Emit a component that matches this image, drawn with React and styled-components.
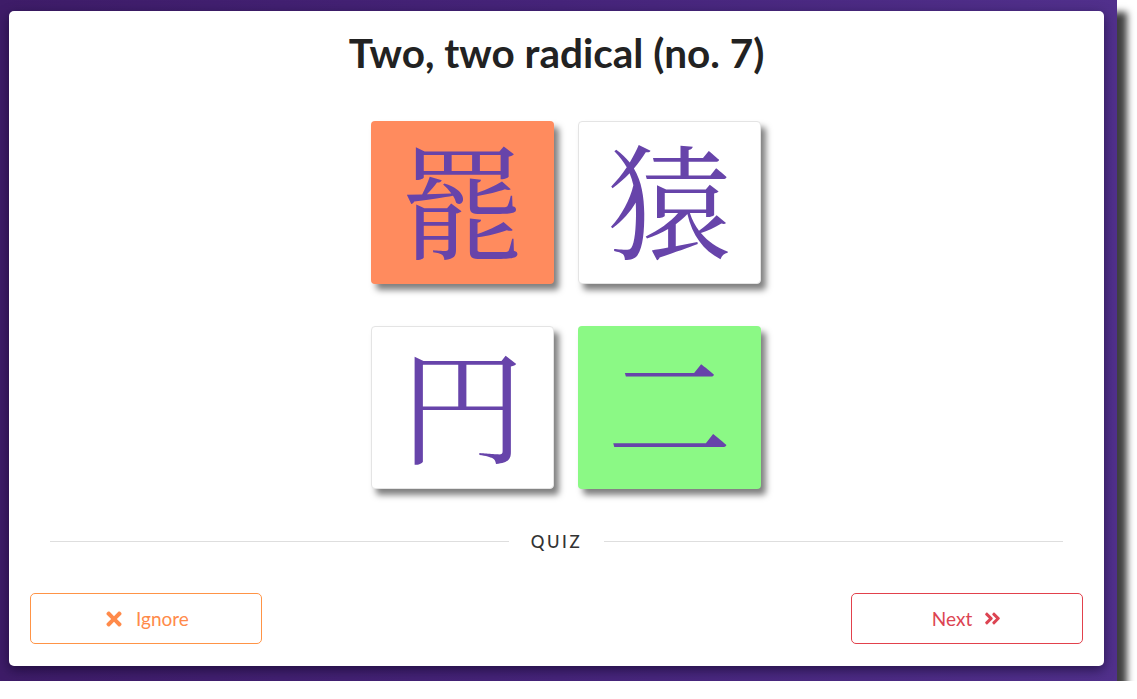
import React from 'react';
import styled, { createGlobalStyle } from 'styled-components';
import { FaTimes, FaAngleDoubleRight } from 'react-icons/fa';

const GlobalStyle = createGlobalStyle`
  html, body {
    margin: 0;
    padding: 0;
    background: #ffffff;
    font-family: Lato, "Open Sans", sans-serif;
  }
`;

const tiles = [
  { kanji: '罷', state: 'wrong' },
  { kanji: '猿', state: 'idle' },
  { kanji: '円', state: 'idle' },
  { kanji: '二', state: 'right' }
];

const tileColors = {
  wrong: '#ff8b5e',
  right: '#8bf985',
  idle: '#ffffff'
};

function App() {
  return (
    <>
      <GlobalStyle />
      <Frame>
        <Card>
          <Title>Two, two radical (no. 7)</Title>
          <TileGrid>
            {tiles.map((t) => (
              <Tile key={t.kanji} $state={t.state}>
                <Kanji>{t.kanji}</Kanji>
              </Tile>
            ))}
          </TileGrid>
          <Divider>
            <Line />
            <DividerLabel>QUIZ</DividerLabel>
            <Line />
          </Divider>
          <Actions>
            <ActionButton $color="#ff8a4a" $border="#ff9446">
              <FaTimes size={22} />
              Ignore
            </ActionButton>
            <ActionButton $color="#dc4452" $border="#e2414c">
              Next
              <FaAngleDoubleRight size={19} />
            </ActionButton>
          </Actions>
        </Card>
      </Frame>
    </>
  );
}

const Frame = styled.div`
  width: 1117px;
  height: 681px;
  box-sizing: border-box;
  padding: 11px 13px 15px 9px;
  background: linear-gradient(90deg, #3e1c68 0%, #46247a 50%, #51308c 100%);
  box-shadow: 10px 12px 7px rgba(0, 0, 0, 0.75);
`;

const Card = styled.div`
  height: 100%;
  box-sizing: border-box;
  background: #ffffff;
  border-radius: 5px;
  box-shadow: 0 4px 12px rgba(10, 0, 30, 0.55);
  display: flex;
  flex-direction: column;
  align-items: stretch;
  padding: 0 21px 22px 21px;
`;

const Title = styled.h1`
  margin: 18px 0 0 0;
  text-align: center;
  font-family: Lato, sans-serif;
  font-weight: 700;
  font-size: 40.5px;
  line-height: 1.2;
  color: #222222;
`;

const TileGrid = styled.div`
  margin: 43px auto 0 auto;
  padding-left: 19px;
  display: grid;
  grid-template-columns: repeat(2, 183px);
  grid-auto-rows: 163px;
  column-gap: 24px;
  row-gap: 42px;
`;

const Tile = styled.div`
  background: ${(p) => tileColors[p.$state]};
  border-radius: 4px;
  border: 1px solid ${(p) => (p.$state === 'idle' ? '#e4e4e4' : 'transparent')};
  box-sizing: border-box;
  box-shadow: 5px 6px 6px rgba(0, 0, 0, 0.5);
  display: flex;
  align-items: center;
  justify-content: center;
`;

const Kanji = styled.span`
  font-family: "Noto Serif CJK JP", "Noto Sans CJK JP", serif;
  font-size: 125px;
  line-height: 1;
  padding-bottom: 12px;
  color: #6744aa;
`;

const Divider = styled.div`
  margin: 42px 20px 0 20px;
  display: flex;
  align-items: center;
  gap: 22px;
`;

const Line = styled.div`
  flex: 1;
  height: 1px;
  background: #dedede;
`;

const DividerLabel = styled.span`
  font-family: Lato, sans-serif;
  font-size: 17px;
  font-weight: 500;
  letter-spacing: 2.6px;
  color: #333333;
`;

const Actions = styled.div`
  margin-top: auto;
  display: flex;
  justify-content: space-between;
`;

const ActionButton = styled.button`
  width: 232px;
  height: 51px;
  box-sizing: border-box;
  background: #ffffff;
  border: 1px solid ${(p) => p.$border};
  border-radius: 5px;
  color: ${(p) => p.$color};
  font-family: Lato, sans-serif;
  font-size: 19px;
  display: flex;
  align-items: center;
  justify-content: center;
  gap: 11px;
  cursor: pointer;
`;

export default App;
